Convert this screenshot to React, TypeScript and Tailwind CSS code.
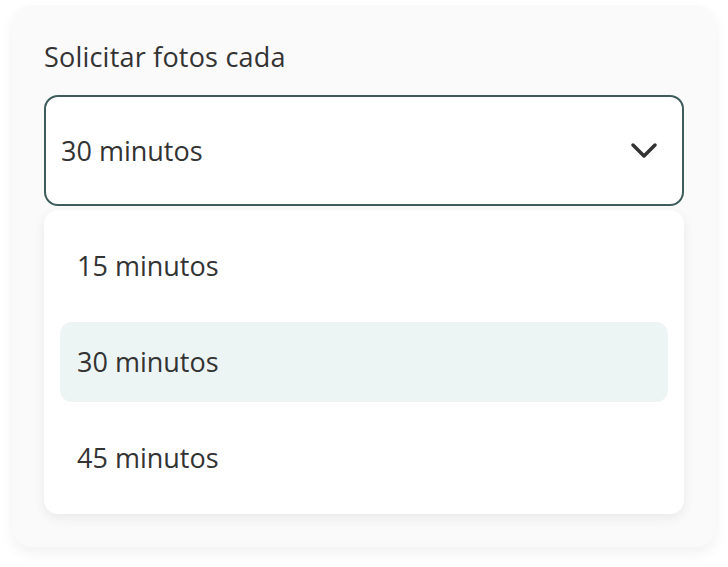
import React, { useState } from "react";

const OPTIONS = ["15 minutos", "30 minutos", "45 minutos"];

export default function App() {
  const [selected, setSelected] = useState("30 minutos");

  return (
    <div className="min-h-screen bg-white pt-[5px] pl-[12px] font-['Open_Sans','Noto_Sans',sans-serif] text-[#333333]">
      {/* Tarjeta */}
      <div className="w-[704px] rounded-[20px] bg-[#fafafa] px-[32px] pt-[34px] pb-[33px] shadow-[0_6px_14px_rgba(0,0,0,0.06)]">
        <div className="text-[27px] leading-[36px] font-medium tracking-[0.2px]">Solicitar fotos cada</div>

        {/* Select */}
        <div className="mt-[20px] flex h-[111px] items-center justify-between rounded-[14px] border-2 border-[#3d5c5a] bg-white pl-[15px] pr-[24px]">
          <span className="text-[27px] leading-[36px]">{selected}</span>
          <svg width="28" height="18" viewBox="0 0 28 18" fill="none" stroke="#333333" strokeWidth="3.5" strokeLinecap="round" strokeLinejoin="round">
            <path d="M3 3l11 11 11-11" />
          </svg>
        </div>

        {/* Lista */}
        <div className="mt-[4px] flex flex-col gap-[16px] rounded-[14px] bg-white p-[16px] shadow-[0_4px_12px_rgba(0,0,0,0.07)]">
          {OPTIONS.map((option) => (
            <div
              key={option}
              onClick={() => setSelected(option)}
              className={`flex h-[80px] cursor-pointer items-center rounded-[12px] px-[17px] text-[27px] ${
                selected === option ? "bg-[#ecf5f4]" : ""
              }`}
            >
              {option}
            </div>
          ))}
        </div>
      </div>
    </div>
  );
}
